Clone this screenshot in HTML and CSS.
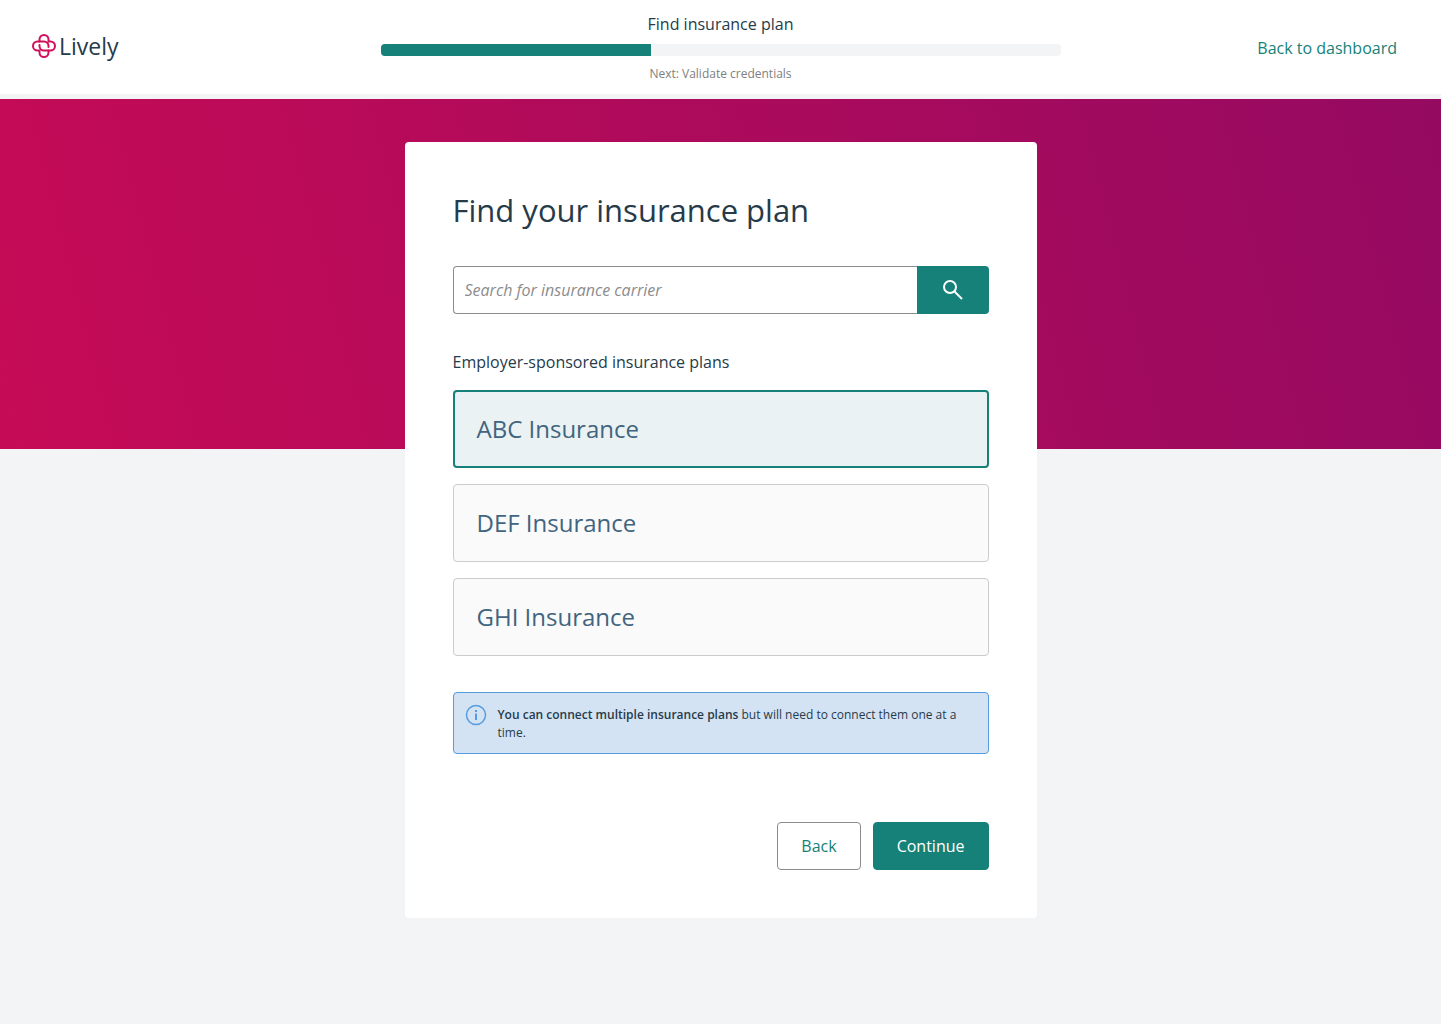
FILE: index.html
```html
<!DOCTYPE html>
<html lang="en">
<head>
  <meta charset="UTF-8">
  <meta name="viewport" content="width=device-width, initial-scale=1.0">
  <title>Find insurance plan - Lively</title>
  <link rel="stylesheet" href="styles.css">
</head>
<body>

  <header class="topbar">
    <a href="#" class="logo">
      <svg width="24" height="24" viewBox="0 0 48 48" fill="none" stroke="#d0105a" stroke-width="4" stroke-linecap="round">
        <path d="M15 15v-4a9 9 0 0 1 18 0v4h4a9 9 0 0 1 0 18H24a9 9 0 0 1-9-9v-2"/>
        <path d="M33 33v4a9 9 0 0 1-18 0v-4h-4a9 9 0 0 1 0-18h13a9 9 0 0 1 9 9v2"/>
      </svg>
      <span>Lively</span>
    </a>

    <div class="steps">
      <label class="step-title" for="progress">Find insurance plan</label>
      <progress id="progress" value="27" max="68"></progress>
      <span class="step-next">Next: Validate credentials</span>
    </div>

    <a href="#" class="dashboard-link">Back to dashboard</a>
  </header>

  <main>
    <form class="card">
      <h1>Find your insurance plan</h1>

      <div class="search">
        <input type="text" placeholder="Search for insurance carrier" aria-label="Search for insurance carrier">
        <button type="button" aria-label="Search">
          <svg width="24" height="24" viewBox="0 0 24 24" fill="none" stroke="#fff" stroke-width="2">
            <circle cx="9" cy="9" r="6"/>
            <path d="M13 13L21 21"/>
          </svg>
        </button>
      </div>

      <fieldset>
        <legend>Employer-sponsored insurance plans</legend>
        <label class="plan"><input type="radio" name="plan" value="abc" checked>ABC Insurance</label>
        <label class="plan"><input type="radio" name="plan" value="def">DEF Insurance</label>
        <label class="plan"><input type="radio" name="plan" value="ghi">GHI Insurance</label>
      </fieldset>

      <div class="notice">
        <svg width="22" height="22" viewBox="0 0 44 44" fill="none" stroke="#559de0">
          <circle cx="22" cy="22" r="19" stroke-width="3"/>
          <path d="M22 19V32M22 12V16" stroke-width="4"/>
        </svg>
        <p><strong>You can connect multiple insurance plans</strong> but will need to connect them one at a time.</p>
      </div>

      <div class="actions">
        <button type="button" class="btn">Back</button>
        <button type="submit" class="btn primary">Continue</button>
      </div>
    </form>
  </main>

</body>
</html>
```
FILE: styles.css
```css
* {
  box-sizing: border-box;
}

body {
  margin: 0;
  font-family: "Open Sans", sans-serif;
  font-size: 16px;
  line-height: 24px;
  color: #263b4a;
  background-color: #f3f4f6;
}

button, input {
  font: inherit;
}

a {
  text-decoration: none;
}

/* Header */
.topbar {
  display: grid;
  grid-template-columns: 1fr minmax(0, 680px) 1fr;
  align-items: center;
  padding: 12px 32px 11px;
  background-color: #fff;
  border-bottom: 5px solid #f3f4f6;
}

.logo {
  display: flex;
  align-items: center;
  gap: 3px;
  padding-bottom: 4px;
  font-size: 23px;
  color: #263b4a;
}

.steps {
  display: flex;
  flex-direction: column;
  align-items: center;
}

.step-title {
  font-weight: 500;
}

progress {
  appearance: none;
  width: 100%;
  height: 12px;
  margin: 8px 0 9px;
  border: none;
  border-radius: 4px;
  overflow: hidden;
  background-color: #f3f4f6;
}

progress::-webkit-progress-bar {
  background-color: #f3f4f6;
}

progress::-webkit-progress-value {
  background-color: #158178;
}

.step-next {
  font-size: 12px;
  line-height: 18px;
  color: #808080;
}

.dashboard-link {
  justify-self: end;
  margin-right: 12px;
  color: #158178;
}

/* Card over the banner */
main {
  padding: 43px 16px;
  background: linear-gradient(76deg, #c60b56, #950a61) no-repeat top / 100% 350px;
}

.card {
  max-width: 632px;
  margin: 0 auto;
  padding: 48px;
  background-color: #fff;
  border-radius: 4px;
}

h1 {
  margin: 0 0 36px;
  font-size: 31px;
  font-weight: 400;
  line-height: 40px;
}

.search {
  display: flex;
  height: 48px;
  margin-bottom: 36px;
}

.search input {
  flex: 1;
  min-width: 0;
  padding: 0 11px;
  border: 1px solid #8c8c8c;
  border-right: none;
  border-radius: 4px 0 0 4px;
}

.search input::placeholder {
  color: #8c8c8c;
  font-style: italic;
}

.search button {
  display: flex;
  align-items: center;
  justify-content: center;
  width: 72px;
  border: none;
  border-radius: 0 4px 4px 0;
  background-color: #158178;
  cursor: pointer;
}

fieldset {
  margin: 0 0 36px;
  padding: 0;
  border: none;
}

legend {
  margin-bottom: 16px;
  padding: 0;
  font-weight: 500;
}

.plan {
  display: flex;
  align-items: center;
  height: 78px;
  margin-bottom: 16px;
  padding: 0 23px;
  border: 1px solid #ccc;
  border-radius: 4px;
  background-color: #fafafa;
  font-size: 24px;
  color: #41657f;
  cursor: pointer;
}

.plan:last-child {
  margin-bottom: 0;
}

.plan input {
  appearance: none;
  margin: 0;
}

.plan:has(input:checked) {
  padding: 0 22px;
  border: 2px solid #158178;
  background-color: #eaf2f4;
}

.notice {
  display: flex;
  gap: 11px;
  margin-bottom: 68px;
  padding: 11px;
  border: 1px solid #559de0;
  border-radius: 4px;
  background-color: #d4e3f4;
}

.notice svg {
  flex: none;
}

.notice p {
  margin: 0;
  padding: 2px 12px 0 0;
  font-size: 12px;
  line-height: 18px;
}

.notice strong {
  font-weight: 600;
}

.actions {
  display: flex;
  justify-content: flex-end;
  gap: 12px;
}

.btn {
  height: 48px;
  padding: 0 23px;
  border: 1px solid #8c8c8c;
  border-radius: 4px;
  background-color: #fff;
  font-weight: 500;
  color: #158178;
  cursor: pointer;
}

.primary {
  border-color: #158178;
  background-color: #158178;
  color: #fff;
}
```
